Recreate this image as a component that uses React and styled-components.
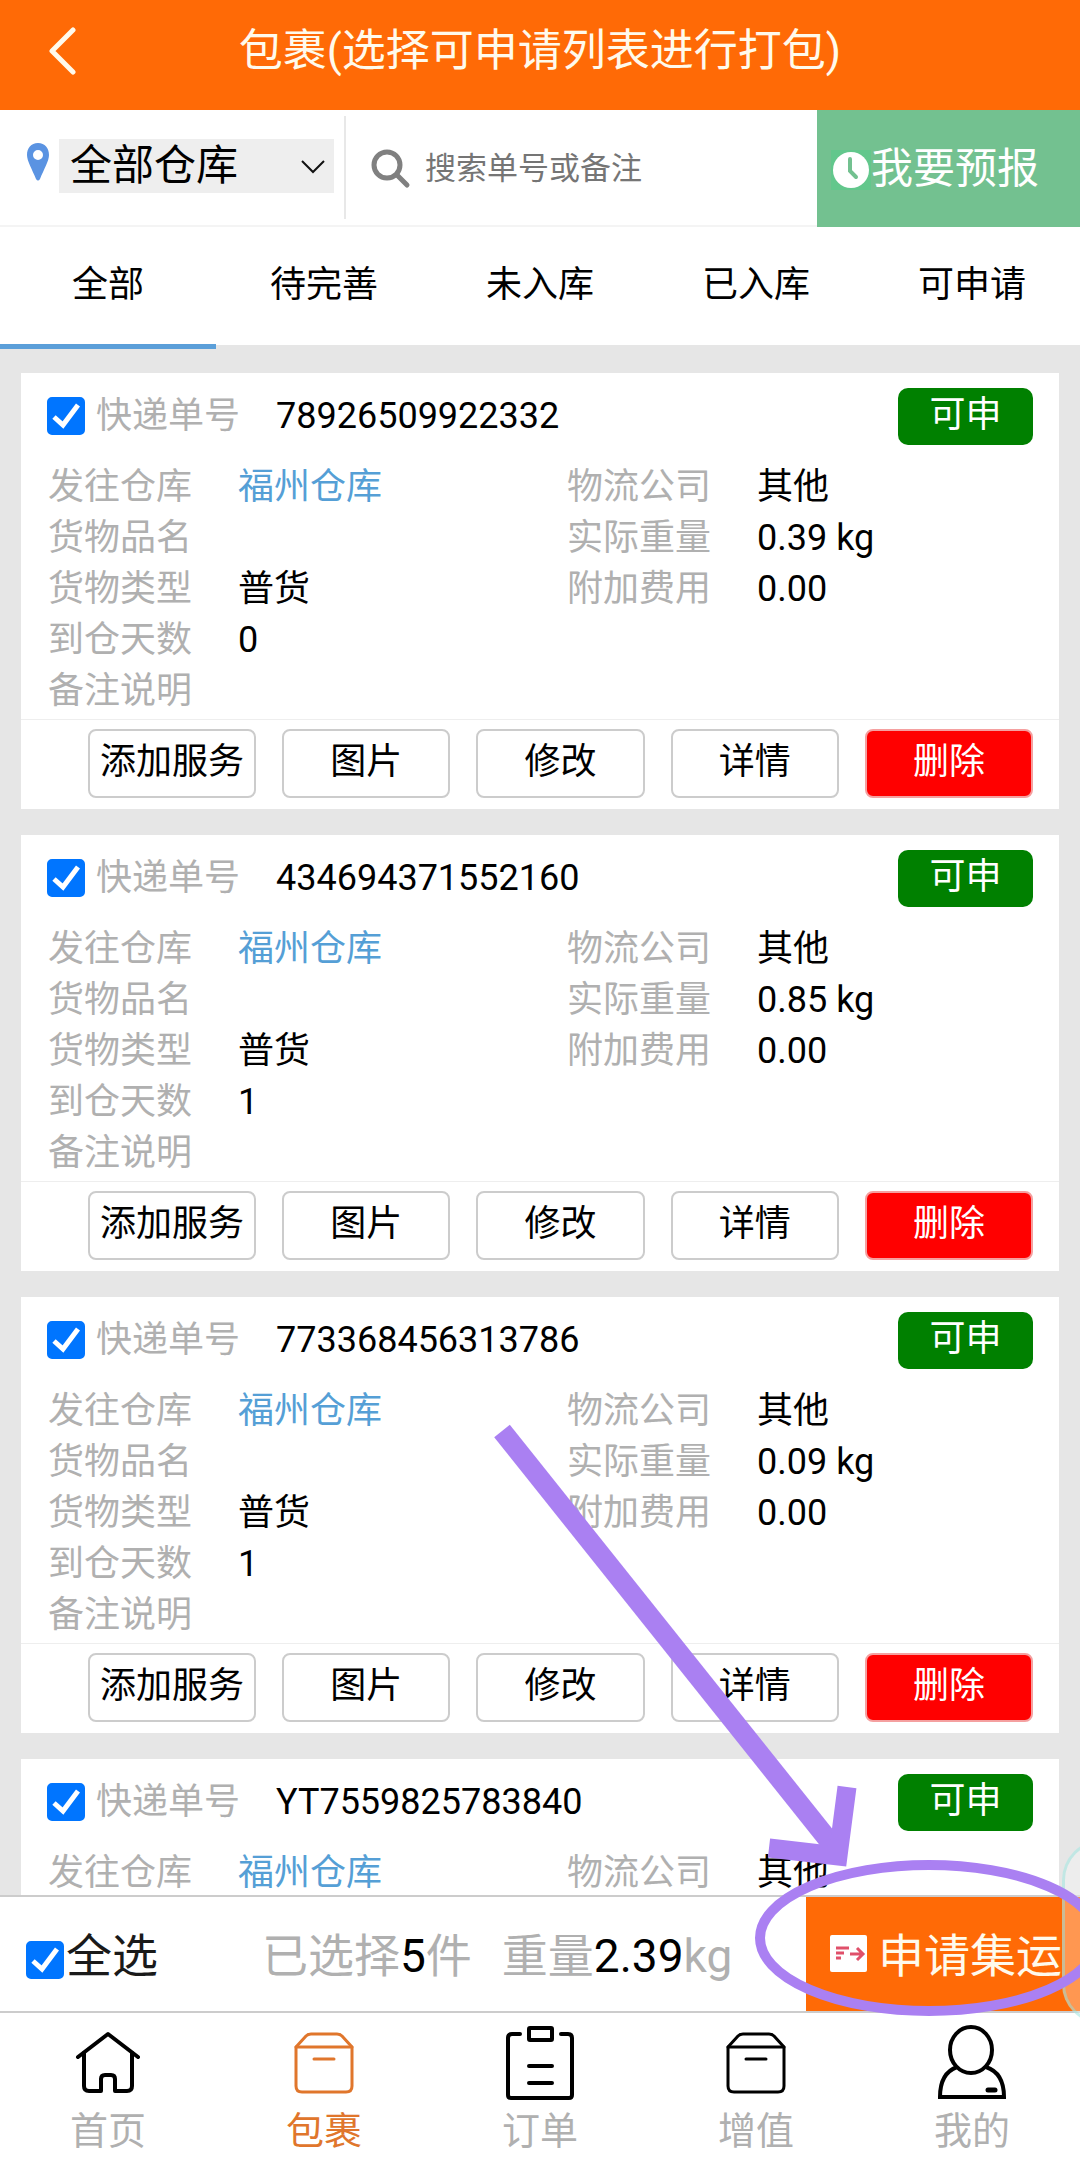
import React, { useState } from "react";
import styled, { createGlobalStyle } from "styled-components";

const GlobalStyle = createGlobalStyle`
  * {
    box-sizing: border-box;
  }
  html, body, #root {
    height: 100%;
  }
  body {
    margin: 0;
    background: #e6e6e6;
    color: #000;
    font-family: Roboto, "Noto Sans CJK SC", sans-serif;
    font-size: 36px;
    line-height: 1.4;
  }
  button, input, select {
    font-family: inherit;
    line-height: inherit;
    color: inherit;
  }
`;

const Page = styled.div`
  position: relative;
  display: flex;
  flex-direction: column;
  height: 100%;
  overflow: hidden;
`;

const Header = styled.header`
  display: grid;
  grid-template-columns: 120px 1fr 120px;
  align-items: center;
  height: 110px;
  padding-bottom: 8px;
  background: #ff6a06;
  color: #fffaec;
  flex-shrink: 0;
`;

const BackButton = styled.button`
  display: flex;
  padding: 0 0 0 48px;
  border: 0;
  background: none;
`;

const Title = styled.h1`
  margin: 0;
  font-size: 44px;
  font-weight: 400;
  line-height: 60px;
  text-align: center;
  white-space: nowrap;
`;

const SearchBar = styled.div`
  display: flex;
  height: 117px;
  background: #fff;
  border-bottom: 2px solid #f4f4f4;
  flex-shrink: 0;
`;

const WarehousePicker = styled.label`
  display: flex;
  align-items: center;
  width: 346px;
  margin: 6px 0;
  padding: 0 10px 4px 26px;
  border-right: 2px solid #e8e8e8;
`;

const SelectWrap = styled.span`
  position: relative;
  flex: 1;
  margin-left: 9px;
  svg {
    position: absolute;
    right: 9px;
    top: 20px;
    pointer-events: none;
  }
`;

const PinIcon = styled.svg`
  margin-bottom: 8px;
`;

const Select = styled.select`
  display: block;
  width: 100%;
  height: 54px;
  padding: 0 11px;
  border: 0;
  border-radius: 0;
  appearance: none;
  background: #eee;
  font-size: 42px;
  line-height: 50px;
`;

const SearchBox = styled.label`
  display: flex;
  align-items: center;
  flex: 1;
  min-width: 0;
  padding: 2px 0 0 25px;
`;

const SearchInput = styled.input`
  flex: 1;
  min-width: 0;
  padding: 0 0 0 14px;
  border: 0;
  outline: 0;
  background: none;
  font-size: 31px;
  line-height: 48px;
  &::placeholder {
    color: #757575;
  }
`;

const ForecastButton = styled.button`
  display: flex;
  align-items: center;
  width: 263px;
  height: 117px;
  padding: 2px 0 0 14px;
  border: 0;
  background: #73c190;
  color: #fff;
  font-size: 42px;
  white-space: nowrap;
`;

const StatusTabs = styled.nav`
  display: flex;
  height: 122px;
  flex-shrink: 0;
  background: linear-gradient(#fff 118px, #e6e6e6 118px);
`;

const StatusTab = styled.button`
  flex: 1;
  padding: 0;
  border: 0;
  border-bottom: 5px solid ${props => props.$active ? "#5b9fd9" : "transparent"};
  background: none;
  font-size: 36px;
`;

const List = styled.main`
  display: flex;
  flex-direction: column;
  gap: 26px;
  flex: 1;
  min-height: 0;
  overflow: hidden;
  padding: 24px 21px 0;
`;

const Card = styled.article`
  flex-shrink: 0;
  padding-bottom: ${props => props.$folded ? "0" : "11px"};
  background: #fff;
`;

const CardHeader = styled.div`
  display: flex;
  align-items: center;
  height: 87px;
  padding: 0 26px;
`;

const CheckLabel = styled.label`
  display: flex;
  align-items: center;
  gap: 11px;
  width: 229px;
  color: #b0b0b0;
  white-space: nowrap;
`;

// Native checkbox with the tick drawn over it
const CheckWrap = styled.span`
  position: relative;
  display: flex;
  width: 38px;
  height: 38px;
  svg {
    position: absolute;
    inset: 0;
    pointer-events: none;
    opacity: 0;
  }
  input:checked + svg {
    opacity: 1;
  }
`;

const CheckInput = styled.input`
  appearance: none;
  width: 38px;
  height: 38px;
  margin: 0;
  border: 2px solid #767676;
  border-radius: 5px;
  background: #fff;
  &:checked {
    border-color: #0075ff;
    background: #0075ff;
  }
`;

const Badge = styled.span`
  margin-left: auto;
  width: 135px;
  height: 57px;
  border-radius: 10px;
  background: #008000;
  color: #fff;
  line-height: 54px;
  text-align: center;
`;

const Info = styled.div`
  display: grid;
  grid-template-columns: 1fr 1fr;
  height: ${props => props.$folded ? "auto" : "259px"};
  padding-top: 2px;
`;

const Column = styled.dl`
  margin: 0;
  padding-left: 27px;
`;

const Row = styled.div`
  display: flex;
  height: 51px;
  line-height: 51px;
  white-space: nowrap;
`;

const Term = styled.dt`
  width: 190px;
  color: #b0b0b0;
`;

const Value = styled.dd`
  margin: 0;
  color: ${props => props.$link ? "#559fd6" : "#000"};
`;

const Actions = styled.div`
  display: grid;
  grid-template-columns: repeat(5, 1fr);
  gap: 26px;
  padding: 9px 26px 0 67px;
  border-top: 1px solid #eee;
`;

const ActionButton = styled.button`
  height: 69px;
  padding: 0 0 2px;
  border: 2px solid ${props => props.$danger ? "#f5a0a0" : "#ccc"};
  border-radius: 8px;
  background: ${props => props.$danger ? "#f00" : "#fff"};
  color: ${props => props.$danger ? "#fff" : "#000"};
  font-size: 36px;
  white-space: nowrap;
`;

const SummaryBar = styled.div`
  display: flex;
  align-items: center;
  height: 116px;
  border-top: 2px solid #ccc;
  background: #fff;
  font-size: 46px;
  white-space: nowrap;
  flex-shrink: 0;
`;

const SelectAll = styled.label`
  display: flex;
  align-items: center;
  gap: 2px;
  width: 236px;
  margin-left: 26px;
  padding-top: 4px;
  color: #1a1a1a;
  ${CheckWrap} {
    margin-top: 8px;
  }
`;

const Totals = styled.div`
  display: flex;
  gap: 30px;
  padding-top: 4px;
  color: #b0b0b0;
  b {
    color: #000;
    font-weight: 400;
  }
`;

const ApplyButton = styled.button`
  display: flex;
  align-items: center;
  gap: 11px;
  width: 274px;
  height: 114px;
  margin-left: auto;
  padding: 4px 0 0 24px;
  border: 0;
  background: #ff6a06;
  color: #fffaec;
  font-size: 46px;
  white-space: nowrap;
  svg {
    margin-bottom: 6px;
  }
`;

const TabBar = styled.nav`
  display: flex;
  height: 159px;
  border-top: 2px solid #ccc;
  background: #fff;
  flex-shrink: 0;
`;

const TabLink = styled.a`
  display: flex;
  flex: 1;
  flex-direction: column;
  align-items: center;
  gap: 6px;
  padding-top: 11px;
  color: ${props => props.$active ? "#e0762c" : "#b0b0b0"};
  font-size: 38px;
  line-height: 50px;
  text-decoration: none;
  svg {
    color: ${props => props.$active ? "#e0762c" : "#000"};
  }
`;

// Hand-drawn hint that points at the apply button
const Hint = styled.svg`
  position: absolute;
  right: 0;
  bottom: 145px;
  pointer-events: none;
`;

const AssistBubble = styled.div`
  position: absolute;
  right: -82px;
  bottom: 146px;
  width: 100px;
  height: 184px;
  border: 3px solid rgba(150, 225, 220, .5);
  border-radius: 40px;
  background: rgba(255, 255, 255, .3);
`;

const Checkbox = props => (
  <CheckWrap>
    <CheckInput type="checkbox" {...props} />
    <svg width="38" height="38" viewBox="0 0 38 38" fill="none" stroke="#fff" strokeWidth="5">
      <path d="M7 20l9 8L31 8" />
    </svg>
  </CheckWrap>
);

const HomeIcon = () => (
  <svg width="76" height="76" viewBox="0 0 76 76" fill="none" stroke="currentColor" strokeWidth="4" strokeLinecap="round" strokeLinejoin="round">
    <path d="M8 33L38 10l30 23" />
    <path d="M14 29v33q0 5 5 5h12V55q0-4 4-4h6q4 0 4 4v12h12q5 0 5-5V29" />
  </svg>
);

const BoxIcon = () => (
  <svg width="76" height="76" viewBox="0 0 76 76" fill="none" stroke="currentColor" strokeWidth="3" strokeLinecap="round" strokeLinejoin="round">
    <path d="M10 23v39q0 6 6 6h44q6 0 6-6V23L56 12q-2-2-5-2H25q-3 0-5 2z" />
    <path d="M10 23h56M28 35h20" />
  </svg>
);

const OrderIcon = () => (
  <svg width="76" height="76" viewBox="0 0 76 76" fill="none" stroke="currentColor" strokeWidth="4" strokeLinecap="round" strokeLinejoin="round">
    <path d="M18 10H10q-4 0-4 4v57q0 3 3 3h58q3 0 3-3V14q0-4-4-4h-7" />
    <rect x="27" y="4" width="23" height="12" rx="1" />
    <path d="M27 42h23M27 59h23" />
  </svg>
);

const UserIcon = () => (
  <svg width="76" height="76" viewBox="0 0 76 76" fill="none" stroke="currentColor" strokeWidth="4">
    <ellipse cx="37" cy="26" rx="21" ry="23" />
    <path d="M23 43C12 47 6 57 6 73h64C70 57 64 47 52 43" />
    <path d="M54 66h7" strokeWidth="5" strokeLinecap="round" />
  </svg>
);

const packages = [
  { no: "78926509922332", weight: "0.39", days: 0 },
  { no: "434694371552160", weight: "0.85", days: 1 },
  { no: "773368456313786", weight: "0.09", days: 1 },
  { no: "YT7559825783840", folded: true }
];

const statuses = ["全部", "待完善", "未入库", "已入库", "可申请"];

const links = [
  { text: "首页", Icon: HomeIcon },
  { text: "包裹", Icon: BoxIcon },
  { text: "订单", Icon: OrderIcon },
  { text: "增值", Icon: BoxIcon },
  { text: "我的", Icon: UserIcon }
];

const InfoRow = ({ term, link, children }) => (
  <Row>
    <Term>{term}</Term>
    <Value $link={link}>{children}</Value>
  </Row>
);

const PackageCard = ({ item }) => (
  <Card $folded={item.folded}>
    <CardHeader>
      <CheckLabel><Checkbox defaultChecked />快递单号</CheckLabel>
      <span>{item.no}</span>
      <Badge>可申</Badge>
    </CardHeader>
    <Info $folded={item.folded}>
      <Column>
        <InfoRow term="发往仓库" link>福州仓库</InfoRow>
        {!item.folded && (
          <>
            <InfoRow term="货物品名" />
            <InfoRow term="货物类型">普货</InfoRow>
            <InfoRow term="到仓天数">{item.days}</InfoRow>
            <InfoRow term="备注说明" />
          </>
        )}
      </Column>
      <Column>
        <InfoRow term="物流公司">其他</InfoRow>
        {!item.folded && (
          <>
            <InfoRow term="实际重量">{item.weight} kg</InfoRow>
            <InfoRow term="附加费用">0.00</InfoRow>
          </>
        )}
      </Column>
    </Info>
    {!item.folded && (
      <Actions>
        <ActionButton>添加服务</ActionButton>
        <ActionButton>图片</ActionButton>
        <ActionButton>修改</ActionButton>
        <ActionButton>详情</ActionButton>
        <ActionButton $danger>删除</ActionButton>
      </Actions>
    )}
  </Card>
);

export default function App() {
  const [status, setStatus] = useState("全部");

  return (
    <Page>
      <GlobalStyle />
      <Header>
        <BackButton aria-label="返回">
          <svg width="30" height="48" viewBox="0 0 30 48" fill="none" stroke="#fffaec" strokeWidth="5" strokeLinecap="round" strokeLinejoin="round">
            <path d="M25 3L4 24l21 21" />
          </svg>
        </BackButton>
        <Title>包裹(选择可申请列表进行打包)</Title>
      </Header>

      <SearchBar>
        <WarehousePicker>
          <PinIcon width="24" height="38" viewBox="0 0 24 38">
            <path fill="#5a93e2" fillRule="evenodd" d="M12 0C5 0 1 5 1 12c0 6 5 14 9 24q2 3 4 0c4-10 9-18 9-24C23 5 19 0 12 0zm0 7a5 5 0 1 1 0 10 5 5 0 0 1 0-10z" />
          </PinIcon>
          <SelectWrap>
            <Select aria-label="仓库">
              <option>全部仓库</option>
              <option>福州仓库</option>
            </Select>
            <svg width="24" height="15" viewBox="0 0 24 15" fill="none" stroke="#111" strokeWidth="2">
              <path d="M1 2l11 11L23 2" />
            </svg>
          </SelectWrap>
        </WarehousePicker>
        <SearchBox>
          <svg width="40" height="40" viewBox="0 0 40 40" fill="none" stroke="#808080" strokeWidth="5" strokeLinecap="round">
            <circle cx="16" cy="16" r="13" />
            <path d="M26 26l10 10" />
          </svg>
          <SearchInput aria-label="搜索" placeholder="搜索单号或备注" />
        </SearchBox>
        <ForecastButton>
          <svg width="40" height="40" viewBox="0 0 40 40">
            <rect width="40" height="40" fill="#62c78c" />
            <circle cx="20" cy="20" r="18" fill="#fff" />
            <path d="M19 9v12l6 6" fill="none" stroke="#73c190" strokeWidth="4" strokeLinecap="round" />
          </svg>
          我要预报
        </ForecastButton>
      </SearchBar>

      <StatusTabs>
        {statuses.map(s => (
          <StatusTab key={s} $active={s === status} onClick={() => setStatus(s)}>{s}</StatusTab>
        ))}
      </StatusTabs>

      <List>
        {packages.map(item => <PackageCard key={item.no} item={item} />)}
      </List>

      <SummaryBar>
        <SelectAll><Checkbox defaultChecked />全选</SelectAll>
        <Totals>
          <span>已选择<b>5</b>件</span>
          <span>重量<b>2.39</b>kg</span>
        </Totals>
        <ApplyButton>
          <svg width="37" height="37" viewBox="0 0 37 37">
            <rect width="37" height="37" rx="2" fill="#fff" />
            <path d="M6 13h13M6 18h8M6 23h5M20 19h13M27 13l6 6-6 6" fill="none" stroke="#e0506a" strokeWidth="3" />
          </svg>
          申请集运
        </ApplyButton>
      </SummaryBar>

      <TabBar>
        {links.map(({ text, Icon }) => (
          <TabLink key={text} href="#" $active={text === "包裹"}>
            <Icon />
            {text}
          </TabLink>
        ))}
      </TabBar>

      <AssistBubble />
      <Hint width="590" height="605" viewBox="490 1420 590 605" fill="none" stroke="#aa80f2">
        <path d="M502 1431L838 1852" strokeWidth="20" />
        <path d="M769 1848L838 1856 847 1787" strokeWidth="19" />
        <ellipse cx="929" cy="1938" rx="169" ry="73" strokeWidth="10" />
      </Hint>
    </Page>
  );
}
